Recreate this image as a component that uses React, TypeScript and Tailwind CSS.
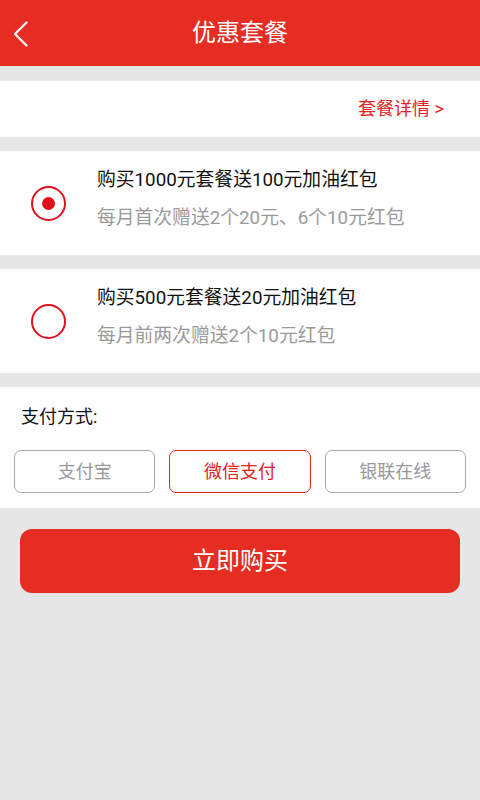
import React from "react";

const font = { fontFamily: 'Roboto, "Noto Sans CJK SC", sans-serif' };

function Radio({ checked }: { checked: boolean }) {
  return (
    <div className="w-[35px] h-[35px] rounded-full border-2 border-[#e3101c] flex items-center justify-center shrink-0">
      {checked && <div className="w-[13px] h-[13px] rounded-full bg-[#e3101c]" />}
    </div>
  );
}

function Option({ checked, title, sub }: { checked: boolean; title: string; sub: string }) {
  return (
    <div className="bg-white h-[104px] flex items-center">
      <div className="w-[97px] flex items-center pl-[31px]">
        <Radio checked={checked} />
      </div>
      <div className="flex flex-col gap-[14px] -mt-[8px]">
        <div className="text-[18.8px] leading-[24px] text-[#111]">{title}</div>
        <div className="text-[18.8px] leading-[24px] text-[#9a9a9a]">{sub}</div>
      </div>
    </div>
  );
}

export default function App() {
  return (
    <div className="w-[480px] h-[800px] bg-[#e5e6e5] flex flex-col" style={font}>
      <div className="h-[66px] bg-[#e52d24] relative flex items-center justify-center">
        <svg className="absolute left-[12px] top-[20px]" width="18" height="28" viewBox="0 0 18 28">
          <path d="M14.5 2.5 L3 14 L14.5 25.5" fill="none" stroke="white" strokeWidth="2.2" strokeLinecap="round" strokeLinejoin="round" />
        </svg>
        <div className="text-white text-[24px] leading-[30px]">优惠套餐</div>
      </div>
      <div className="h-[15px]" />
      <div className="bg-white h-[56px] flex items-center justify-end pr-[36px]">
        <span className="text-[#e3241c] text-[18px] leading-[24px]">套餐详情 &gt;</span>
      </div>
      <div className="h-[14px]" />
      <Option checked title="购买1000元套餐送100元加油红包" sub="每月首次赠送2个20元、6个10元红包" />
      <div className="h-[14px]" />
      <Option checked={false} title="购买500元套餐送20元加油红包" sub="每月前两次赠送2个10元红包" />
      <div className="h-[14px]" />
      <div className="bg-white h-[121px] flex flex-col px-[14px]">
        <div className="pl-[7px] pt-[18px] text-[18px] leading-[24px] text-[#111]">支付方式:</div>
        <div className="mt-[21px] grid grid-cols-3 gap-[14px]">
          <div className="h-[43px] rounded-[7px] border-[1.5px] border-[#a8a8a8] flex items-center justify-center text-[18px] text-[#999]">支付宝</div>
          <div className="h-[43px] rounded-[7px] border-[1.5px] border-[#e3241c] flex items-center justify-center text-[18px] text-[#e3241c]">微信支付</div>
          <div className="h-[43px] rounded-[7px] border-[1.5px] border-[#a8a8a8] flex items-center justify-center text-[18px] text-[#999]">银联在线</div>
        </div>
      </div>
      <div className="px-[20px] pt-[21px]">
        <div className="h-[64px] rounded-[12px] bg-[#e52d24] flex items-center justify-center text-white text-[24px]">立即购买</div>
      </div>
    </div>
  );
}
